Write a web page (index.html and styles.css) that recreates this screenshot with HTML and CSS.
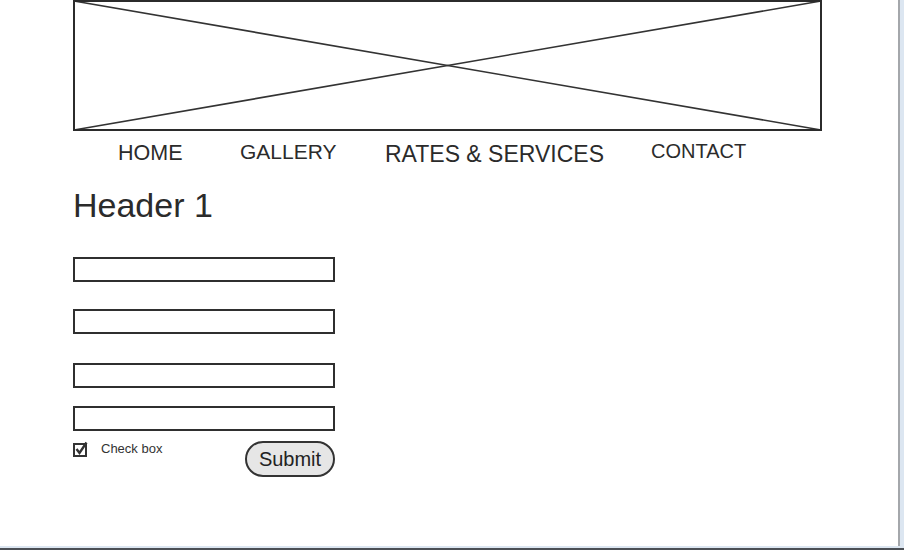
FILE: index.html
```html
<!DOCTYPE html>
<html lang="en">
<head>
  <meta charset="UTF-8">
  <title>Wireframe</title>
  <link rel="stylesheet" href="styles.css">
</head>
<body>
  <div class="screen">
    <div class="page">
      <!-- image placeholder -->
      <div class="banner">
        <svg width="749" height="131" viewBox="0 0 749 131">
          <line x1="1" y1="1" x2="748" y2="130" stroke="#333" stroke-width="1.6"/>
          <line x1="1" y1="130" x2="748" y2="1" stroke="#333" stroke-width="1.6"/>
          <rect x="1" y="1" width="747" height="129" fill="none" stroke="#2b2b2b" stroke-width="2"/>
        </svg>
      </div>

      <!-- menu -->
      <nav class="nav">
        <span class="nav-item home">HOME</span>
        <span class="nav-item gallery">GALLERY</span>
        <span class="nav-item rates">RATES &amp; SERVICES</span>
        <span class="nav-item contact">CONTACT</span>
      </nav>

      <h1 class="title">Header 1</h1>

      <form class="form">
        <div class="field f1"></div>
        <div class="field f2"></div>
        <div class="field f3"></div>
        <div class="field f4"></div>
        <div class="form-bottom">
          <label class="check">
            <svg width="16" height="16" viewBox="0 0 16 16">
              <rect x="1" y="3" width="12" height="12" fill="#fff" stroke="#333" stroke-width="2"/>
              <path d="M3.5 8 L6.5 12 L13.5 1.5" fill="none" stroke="#333" stroke-width="2.4"/>
            </svg>
            <span>Check box</span>
          </label>
          <span class="submit">Submit</span>
        </div>
      </form>
    </div>
  </div>
</body>
</html>
```

FILE: styles.css
```css
* {
  box-sizing: border-box;
  margin: 0;
  padding: 0;
}
body {
  background: #dce6f1;
  font-family: "Liberation Sans", Arial, sans-serif;
  color: #2b2b2b;
  overflow: hidden;
}
/* 外框 */
.screen {
  width: 904px;
  height: 550px;
  border-bottom: 2px solid #4b4f55;
  background: #dce6f1;
}
.page {
  width: 900px;
  height: 546px;
  background: #fff;
  border-right: 2px solid #a4a7ab;
  padding-left: 73px;
}
.banner svg {
  display: block;
}
/* 選單 */
.nav {
  display: grid;
  grid-template-columns: 45px 122px 145px 266px auto;
  margin-top: 10px;
  align-items: start;
  line-height: 1;
}
.nav-item {
  white-space: nowrap;
}
.home {
  grid-column: 2;
  font-size: 21.5px;
  margin-top: 2px;
}
.gallery {
  font-size: 21px;
}
.rates {
  font-size: 23px;
  margin-top: 2px;
}
.contact {
  font-size: 20px;
}
.title {
  font-size: 34px;
  font-weight: normal;
  line-height: 1;
  margin-top: 22px;
}
/* 表單 */
.form {
  width: 262px;
  margin-top: 35px;
}
.field {
  height: 25px;
  border: 2px solid #2f2f2f;
}
.f2 { margin-top: 27px; }
.f3 { margin-top: 29px; }
.f4 { margin-top: 18px; }
.form-bottom {
  display: flex;
  justify-content: space-between;
  align-items: flex-start;
  margin-top: 10px;
}
.check {
  display: flex;
  align-items: flex-start;
  gap: 12px;
  font-size: 13px;
  line-height: 1;
  color: #333;
  margin-top: 1px;
}
.check svg {
  display: block;
  margin-top: -1px;
}
.submit {
  width: 90px;
  height: 36px;
  border: 2px solid #333;
  border-radius: 18px;
  background: #e6e6e6;
  font-size: 20px;
  display: flex;
  align-items: center;
  justify-content: center;
  color: #222;
}
```
